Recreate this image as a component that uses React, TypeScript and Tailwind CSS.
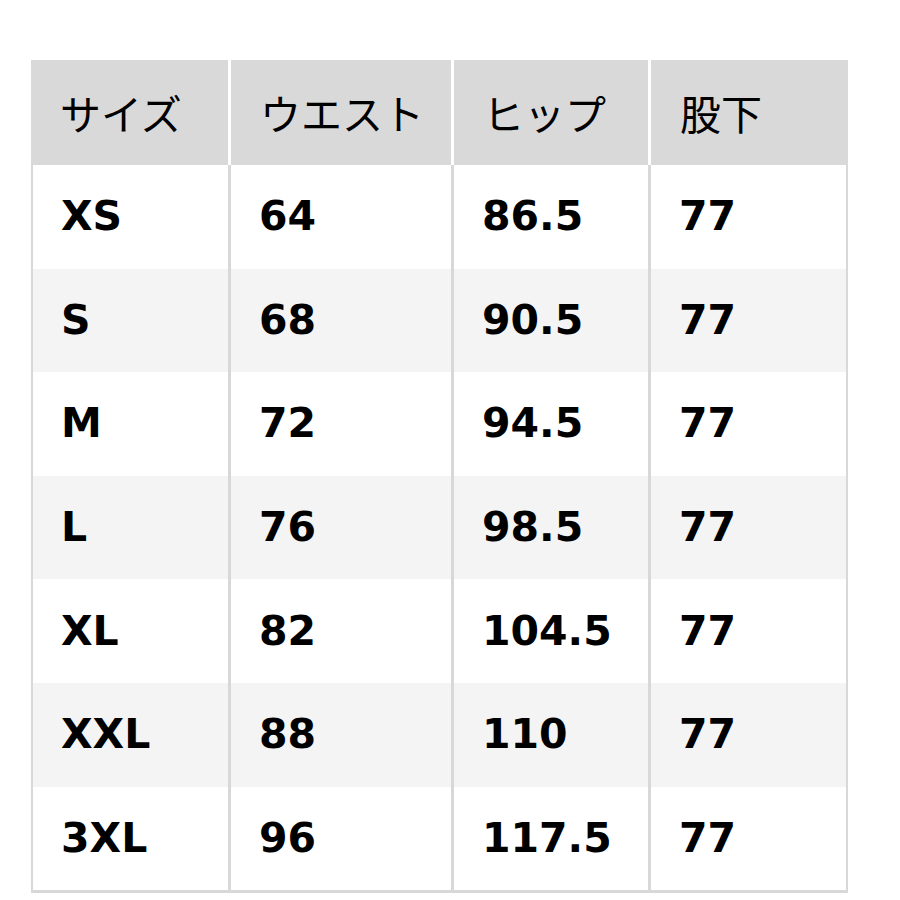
import React from 'react';

const headers = ['サイズ', 'ウエスト', 'ヒップ', '股下'];

const rows: string[][] = [
  ['XS', '64', '86.5', '77'],
  ['S', '68', '90.5', '77'],
  ['M', '72', '94.5', '77'],
  ['L', '76', '98.5', '77'],
  ['XL', '82', '104.5', '77'],
  ['XXL', '88', '110', '77'],
  ['3XL', '96', '117.5', '77'],
];

export default function App() {
  return (
    <div className="w-[900px] h-[900px] bg-white pt-[60px] pl-[31px]">
      <div className="w-[817px]">
        {/* header */}
        <div className="grid grid-cols-[197px_223px_197px_200px] h-[105px] bg-[#d9d9d9] text-[41px] text-black font-['Noto_Sans_CJK_JP',sans-serif] leading-none">
          {headers.map((h, i) => (
            <div
              key={h}
              className={`flex items-center pl-[29px] ${i > 0 ? 'border-l-[3px] border-white' : ''}`}
            >
              {h}
            </div>
          ))}
        </div>

        {/* body */}
        <div className="border-x-2 border-b-[3px] border-[#d8d8d8]">
          {rows.map((r, ri) => (
            <div
              key={r[0]}
              className={`grid grid-cols-[195px_223px_197px_198px] h-[103.6px] ${ri % 2 === 1 ? 'bg-[#f4f4f4]' : 'bg-white'}`}
            >
              {r.map((c, ci) => (
                <div
                  key={ci}
                  className={`flex items-center pl-[28px] text-[41px] font-bold text-black font-['DejaVu_Sans',sans-serif] leading-none ${
                    ci > 0 ? 'border-l-[3px] border-[#d8d8d8]' : ''
                  }`}
                >
                  {c}
                </div>
              ))}
            </div>
          ))}
        </div>
      </div>
    </div>
  );
}
